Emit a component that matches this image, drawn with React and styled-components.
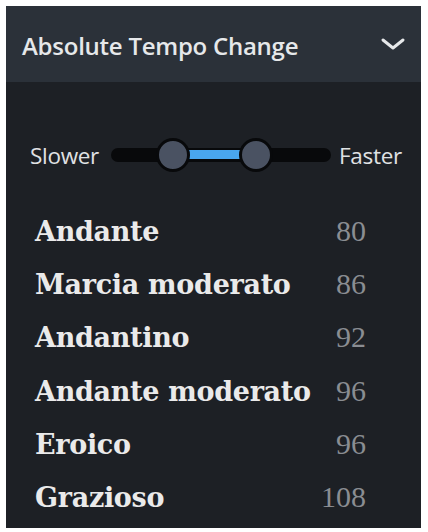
import React from 'react'
import styled, { createGlobalStyle } from 'styled-components'

const GlobalStyle = createGlobalStyle`
  html, body {
    margin: 0;
    padding: 0;
    background: #ffffff;
  }
`

const Page = styled.div`
  padding: 6px 0 0 6px;
  width: 428px;
  height: 532px;
  box-sizing: border-box;
`

const Panel = styled.section`
  width: 415px;
  height: 522px;
  background: #1d2025;
  display: flex;
  flex-direction: column;
  overflow: hidden;
  & > * {
    flex-shrink: 0;
  }
`

const Header = styled.header`
  height: 76px;
  background: #2b3139;
  display: flex;
  align-items: center;
  justify-content: space-between;
  padding: 2px 14px 0 16px;
  box-sizing: border-box;
`

const Title = styled.h2`
  margin: 0;
  font-family: "Open Sans", sans-serif;
  font-weight: 600;
  font-size: 24px;
  letter-spacing: -0.25px;
  color: #e6e8ea;
`

const Chevron = styled.svg`
  width: 28px;
  height: 28px;
`

const SliderRow = styled.div`
  display: flex;
  align-items: center;
  padding: 54px 0 0 24px;
  height: 38px;
`

const SideLabel = styled.span`
  font-family: "Open Sans", sans-serif;
  font-size: 22.5px;
  letter-spacing: -0.3px;
  color: #e0e2e4;
`

const Track = styled.div`
  position: relative;
  width: 220px;
  height: 14px;
  margin: 0 8px 0 12px;
  background: #08090b;
  border-radius: 7px;
`

const Fill = styled.div`
  position: absolute;
  top: 2px;
  height: 9px;
  background: #49a6ee;
`

const Thumb = styled.div`
  position: absolute;
  top: 50%;
  width: 28px;
  height: 28px;
  border-radius: 50%;
  background: #4a5262;
  border: 3px solid #08090b;
  transform: translate(-50%, -50%);
`

const List = styled.ul`
  list-style: none;
  margin: 0;
  padding: 40px 55px 0 29px;
`

const Row = styled.li`
  display: flex;
  justify-content: space-between;
  align-items: baseline;
  height: 53.2px;
`

const Name = styled.span`
  font-family: "DejaVu Serif", serif;
  font-weight: 700;
  font-size: 27px;
  letter-spacing: -0.3px;
  color: #eaeaea;
`

const Bpm = styled.span`
  font-family: "Liberation Serif", serif;
  font-size: 30px;
  color: #8a8d92;
`

const tempos = [
  ['Andante', 80],
  ['Marcia moderato', 86],
  ['Andantino', 92],
  ['Andante moderato', 96],
  ['Eroico', 96],
  ['Grazioso', 108],
]

const RangeSlider = ({ low, high }) => (
  <Track>
    <Fill style={{ left: `${low}%`, width: `${high - low}%` }} />
    <Thumb style={{ left: `${low}%` }} />
    <Thumb style={{ left: `${high}%` }} />
  </Track>
)

const App = () => (
  <Page>
    <GlobalStyle />
    <Panel>
      <Header>
        <Title>Absolute Tempo Change</Title>
        <Chevron viewBox="0 0 28 28" fill="none" stroke="#e6e8ea" strokeWidth="3" strokeLinecap="round" strokeLinejoin="round">
          <path d="M4 9l10 8 10-8" />
        </Chevron>
      </Header>
      <SliderRow>
        <SideLabel>Slower</SideLabel>
        <RangeSlider low={28} high={65.7} />
        <SideLabel>Faster</SideLabel>
      </SliderRow>
      <List>
        {tempos.map(([name, bpm]) => (
          <Row key={name}>
            <Name>{name}</Name>
            <Bpm>{bpm}</Bpm>
          </Row>
        ))}
      </List>
    </Panel>
  </Page>
)

export default App
